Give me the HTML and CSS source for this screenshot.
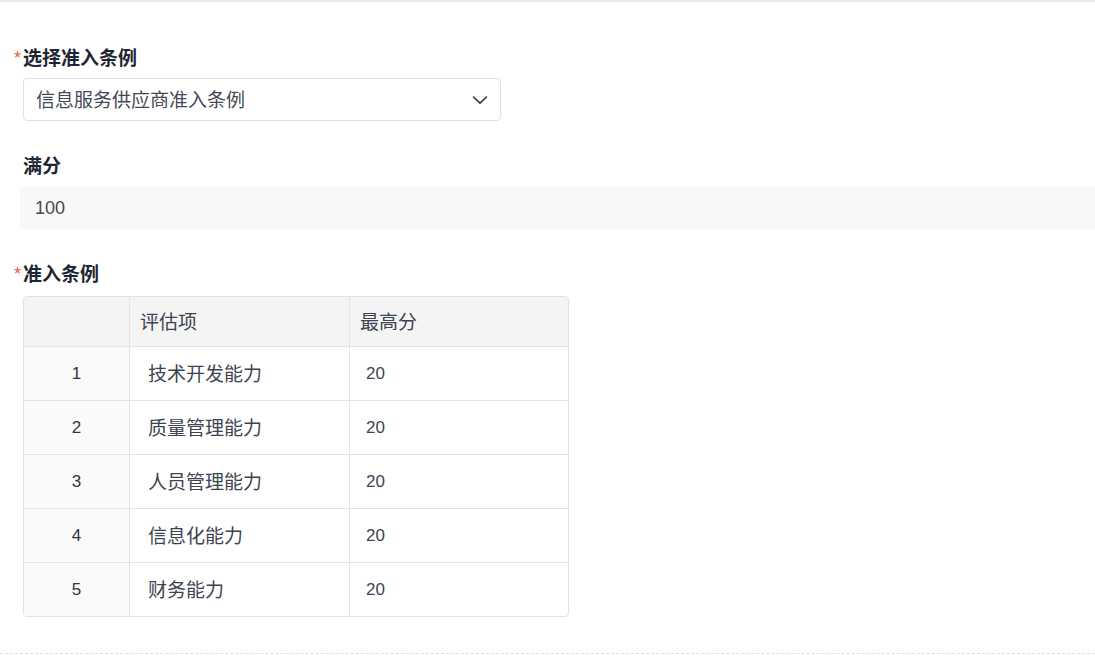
FILE: index.html
```html
<!DOCTYPE html>
<html lang="zh-CN">
<head>
<meta charset="utf-8">
<title>准入条例</title>
<link rel="stylesheet" href="styles.css">
</head>
<body>
<div class="page">
  <div class="label label-req label-first"><span class="star">*</span><span>选择准入条例</span></div>
  <div class="select">
    <span class="select-text">信息服务供应商准入条例</span>
    <svg class="chevron" width="18" height="18" viewBox="0 0 18 18"><path d="M2.5 6 L9 12.2 L15.5 6" fill="none" stroke="#2f3542" stroke-width="1.6" stroke-linecap="round" stroke-linejoin="round"/></svg>
  </div>

  <div class="label label-plain">满分</div>
  <div class="readonly">100</div>

  <div class="label label-req"><span class="star">*</span><span>准入条例</span></div>
  <div class="table-wrap">
    <table class="tbl">
      <thead>
        <tr><th class="c-idx"></th><th class="c-item">评估项</th><th class="c-score">最高分</th></tr>
      </thead>
      <tbody>
        <tr><td class="c-idx">1</td><td class="c-item">技术开发能力</td><td class="c-score">20</td></tr>
        <tr><td class="c-idx">2</td><td class="c-item">质量管理能力</td><td class="c-score">20</td></tr>
        <tr><td class="c-idx">3</td><td class="c-item">人员管理能力</td><td class="c-score">20</td></tr>
        <tr><td class="c-idx">4</td><td class="c-item">信息化能力</td><td class="c-score">20</td></tr>
        <tr><td class="c-idx">5</td><td class="c-item">财务能力</td><td class="c-score">20</td></tr>
      </tbody>
    </table>
  </div>
  <div class="dash"></div>
</div>
</body>
</html>
```

FILE: styles.css
```css
html, body {
  margin: 0;
  padding: 0;
  background: #ffffff;
}
body {
  font-family: "Liberation Sans", "Noto Sans CJK SC", sans-serif;
  font-size: 19px;
  color: #3d4350;
}
.page {
  border-top: 2px solid #e8e8e8;
  width: 1095px;
  overflow: hidden;
}
.label {
  display: flex;
  align-items: center;
  height: 26px;
  line-height: 26px;
  font-weight: 700;
  font-size: 19px;
  color: #1f2633;
  margin-top: 33px;
}
.label-first {
  margin-top: 44px;
}
.label-req {
  padding-left: 14px;
}
.label-plain {
  padding-left: 23px;
}
.star {
  display: inline-block;
  width: 9px;
  color: #ec5a3c;
  font-size: 18px;
  font-weight: 400;
  line-height: 18px;
  align-self: flex-start;
  margin-top: 3px;
}
.select {
  margin: 6px 0 0 23px;
  width: 478px;
  height: 43px;
  box-sizing: border-box;
  border: 1px solid #dcdfe4;
  border-radius: 4px;
  display: flex;
  align-items: center;
  justify-content: space-between;
  padding: 0 11px 0 12px;
  font-size: 19px;
  color: #434956;
}
.select-text {
  padding-bottom: 3px;
}
.chevron {
  display: block;
}
.readonly {
  margin: 7px 0 0 20px;
  height: 42px;
  background: #f8f8f8;
  border-radius: 3px 0 0 3px;
  display: flex;
  align-items: center;
  padding-left: 15px;
  font-size: 18px;
  color: #434956;
}
.table-wrap {
  margin: 8px 0 0 23px;
  width: 546px;
  box-sizing: border-box;
  border: 1px solid #e2e2e2;
  border-radius: 4px;
  overflow: hidden;
}
.tbl {
  width: 100%;
  border-collapse: collapse;
  table-layout: fixed;
  font-size: 19px;
  color: #3d4350;
}
.tbl th, .tbl td {
  border-right: 1px solid #e4e4e4;
  border-bottom: 1px solid #e4e4e4;
  padding: 0;
  text-align: left;
  font-weight: 400;
}
.tbl th:last-child, .tbl td:last-child {
  border-right: none;
}
.tbl tbody tr:last-child td {
  border-bottom: none;
}
.tbl th {
  height: 46px;
  background: #f4f4f4;
  padding: 0 0 3px 10px;
  color: #3d4350;
}
.tbl td {
  height: 53px;
}
.tbl th.c-idx {
  width: 105px;
  padding-left: 0;
}
.tbl th.c-item {
  width: 209px;
}
.tbl td.c-idx {
  text-align: center;
  background: #fafafa;
  font-size: 17px;
  color: #2f3542;
}
.tbl td.c-item {
  height: 50px;
  padding: 0 0 3px 18px;
}
.tbl td.c-score {
  padding-left: 16px;
  font-size: 17px;
}
.dash {
  margin-top: 36px;
  border-top: 1px dashed #dedede;
}
```
